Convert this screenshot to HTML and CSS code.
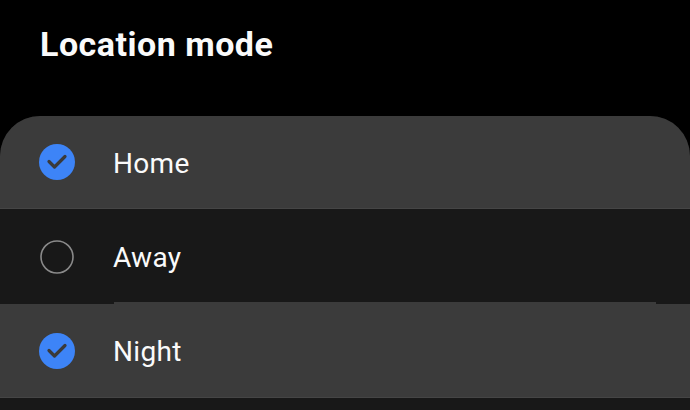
FILE: index.html
```html
<!DOCTYPE html>
<html lang="en">
<head>
<meta charset="utf-8">
<title>Location mode</title>
<link rel="stylesheet" href="styles.css">
</head>
<body>
<h1 class="title">Location mode</h1>
<div class="panel">
  <div class="row row-on row-first">
    <svg class="check" viewBox="0 0 36 36" width="36" height="36"><circle cx="18" cy="18" r="18" fill="#3d84f7"/><path d="M10 17.5 L15.5 23 L26 12.5" fill="none" stroke="#3a3a3a" stroke-width="3.2" stroke-linecap="round" stroke-linejoin="round"/></svg>
    <span class="label">Home</span>
  </div>
  <div class="row row-off">
    <svg class="check" viewBox="0 0 36 36" width="36" height="36"><circle cx="18" cy="18" r="16" fill="none" stroke="#8a8a8a" stroke-width="1.6"/></svg>
    <span class="label">Away</span>
  </div>
  <div class="row row-on row-last">
    <svg class="check" viewBox="0 0 36 36" width="36" height="36"><circle cx="18" cy="18" r="18" fill="#3d84f7"/><path d="M10 17.5 L15.5 23 L26 12.5" fill="none" stroke="#3a3a3a" stroke-width="3.2" stroke-linecap="round" stroke-linejoin="round"/></svg>
    <span class="label">Night</span>
  </div>
</div>
</body>
</html>
```

FILE: styles.css
```css
html, body {
  margin: 0;
  padding: 0;
  background: #000;
  width: 690px;
  height: 410px;
  overflow: hidden;
  font-family: Roboto, "Noto Sans", sans-serif;
  color: #fafafa;
}
.title {
  margin: 0;
  padding: 24px 0 0 40px;
  font-size: 34px;
  font-weight: 700;
  line-height: 40px;
  letter-spacing: 0.5px;
}
.panel {
  margin-top: 52px;
  background: #181818;
  border-radius: 40px 40px 0 0;
  overflow: hidden;
  height: 294px;
}
.row {
  display: flex;
  align-items: center;
  padding-left: 39px;
  gap: 38px;
  box-sizing: border-box;
  position: relative;
}
.row-on { background: #3b3b3b; }
.row-off { background: #181818; }
.row-first { height: 93px; border-bottom: 1px solid #454545; }
.row-off { height: 95px; }
.row-last { height: 94px; border-bottom: 1px solid #454545; }
.row-last::before {
  content: "";
  position: absolute;
  top: -2px;
  left: 114px;
  right: 34px;
  height: 2px;
  background: #3b3b3b;
}
.check { flex: none; display: block; }
.label {
  font-size: 28px;
  line-height: 33px;
  font-weight: 400;
  letter-spacing: 0.3px;
  padding-top: 2px;
}
```
